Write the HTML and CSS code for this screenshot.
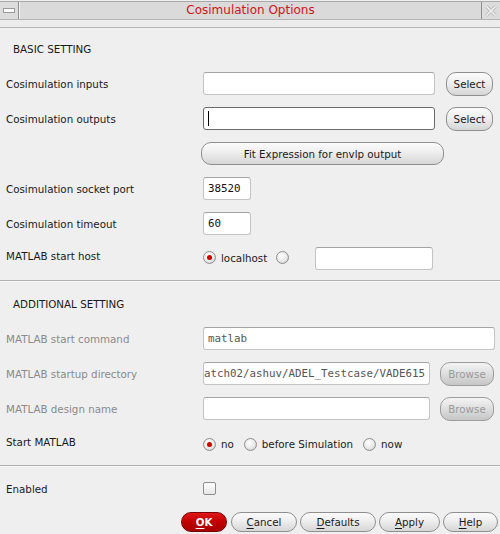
FILE: index.html
```html
<!DOCTYPE html>
<html>
<head>
<meta charset="utf-8">
<link rel="stylesheet" href="styles.css">
</head>
<body>
<div class="window">
  <div class="titlebar">
    <div class="tb-btn tb-left"><span class="min-icon"></span></div>
    <div class="title">Cosimulation Options</div>
    <div class="tb-btn tb-right">
      <svg width="12" height="12" viewBox="0 0 12 12">
        <path d="M1.5 1.5 L10.5 10.5 M10.5 1.5 L1.5 10.5" stroke="#bdbdbd" stroke-width="3.4" fill="none"/>
        <path d="M1.5 1.5 L10.5 10.5 M10.5 1.5 L1.5 10.5" stroke="#f4f4f4" stroke-width="1.4" fill="none"/>
      </svg>
    </div>
  </div>
  <div class="title-gap"></div>

  <div class="section basic">
    <div class="heading">BASIC SETTING</div>
    <div class="row">
      <span class="lbl">Cosimulation inputs</span>
      <span class="input w232"></span>
      <span class="btn sel">Select</span>
    </div>
    <div class="row">
      <span class="lbl">Cosimulation outputs</span>
      <span class="input w232 focus"><span class="caret"></span></span>
      <span class="btn sel">Select</span>
    </div>
    <div class="row">
      <span class="lbl"></span>
      <span class="btn fit">Fit Expression for envlp output</span>
    </div>
    <div class="row">
      <span class="lbl">Cosimulation socket port</span>
      <span class="input w48 mono">38520</span>
    </div>
    <div class="row">
      <span class="lbl">Cosimulation timeout</span>
      <span class="input w48 mono">60</span>
    </div>
    <div class="row host">
      <span class="lbl up">MATLAB start host</span>
      <span class="radio on"></span>
      <span class="opt">localhost</span>
      <span class="radio r2"></span>
      <span class="input w118 hostin"></span>
    </div>
  </div>

  <div class="sep sep1"></div>

  <div class="section additional">
    <div class="heading">ADDITIONAL SETTING</div>
    <div class="row">
      <span class="lbl dim">MATLAB start command</span>
      <span class="input w292 mono gray">matlab</span>
    </div>
    <div class="row">
      <span class="lbl dim">MATLAB startup directory</span>
      <span class="input w227 mono gray scrolled">atch02/ashuv/ADEL_Testcase/VADE615</span>
      <span class="btn browse">Browse</span>
    </div>
    <div class="row">
      <span class="lbl dim">MATLAB design name</span>
      <span class="input w227"></span>
      <span class="btn browse">Browse</span>
    </div>
    <div class="row start">
      <span class="lbl">Start MATLAB</span>
      <span class="radio on"></span>
      <span class="opt">no</span>
      <span class="radio r-before"></span>
      <span class="opt">before Simulation</span>
      <span class="radio r-now"></span>
      <span class="opt">now</span>
    </div>
  </div>

  <div class="sep sep2"></div>

  <div class="row enabled">
    <span class="lbl">Enabled</span>
    <span class="check"></span>
  </div>

  <div class="actions">
    <span class="btn act ok"><u>O</u>K</span>
    <span class="btn act cancel"><u>C</u>ancel</span>
    <span class="btn act defaults"><u>D</u>efaults</span>
    <span class="btn act apply"><u>A</u>pply</span>
    <span class="btn act help"><u>H</u>elp</span>
  </div>
</div>
</body>
</html>
```

FILE: styles.css
```css
html, body {
  margin: 0;
  padding: 0;
}
body {
  width: 500px;
  height: 534px;
  overflow: hidden;
  background: #efefef;
  font-family: "DejaVu Sans", "Liberation Sans", sans-serif;
  font-size: 10.3px;
  color: #1a1a1a;
}
.window {
  width: 500px;
  height: 534px;
}

/* title bar */
.titlebar {
  margin-top: 1px;
  height: 17px;
  border-top: 1px solid #a9a9a9;
  border-bottom: 1px solid #b4b4b4;
  background: #dadada;
  display: flex;
  align-items: stretch;
}
.tb-btn {
  width: 18px;
  display: flex;
  align-items: center;
  justify-content: center;
  background: #dcdcdc;
}
.tb-left {
  border-right: 1px solid #8e8e8e;
}
.tb-right {
  border-left: 1px solid #8e8e8e;
}
.min-icon {
  width: 10px;
  height: 3px;
  background: #fafafa;
  border: 1px solid #9a9a9a;
}
.title {
  flex: 1;
  text-align: center;
  color: #d2121c;
  font-size: 12px;
  line-height: 17px;
  border-left: 1px solid #f4f4f4;
}
.title-gap {
  height: 7px;
  border-bottom: 1px solid #b6b6b6;
  background: #ececec;
}

/* sections */
.section.basic {
  padding-top: 3px;
}
.heading {
  height: 35px;
  display: flex;
  align-items: center;
  padding-left: 13px;
  color: #1a1a1a;
}
.row {
  height: 35px;
  display: flex;
  align-items: center;
  padding-left: 6px;
}
.lbl {
  width: 197px;
  flex: none;
}
.lbl.up {
  position: relative;
  top: -3px;
}
.lbl.dim {
  color: #8a8a8a;
}

.input {
  box-sizing: border-box;
  height: 23px;
  background: #ffffff;
  border: 1px solid #c4c4c4;
  border-top-color: #a4a4a4;
  border-radius: 3px;
  display: flex;
  align-items: center;
  padding-left: 4px;
  overflow: hidden;
  white-space: nowrap;
  flex: none;
}
.input.focus {
  border-color: #6a6a6a;
}
.caret {
  width: 1px;
  height: 15px;
  background: #000;
}
.w232 { width: 232px; }
.w48 { width: 48px; }
.w118 { width: 118px; }
.w292 { width: 292px; }
.w227 { width: 227px; }
.mono {
  font-family: "DejaVu Sans Mono", "Liberation Mono", monospace;
  font-size: 10.8px;
  color: #111111;
  padding-left: 4px;
}
.mono.gray {
  color: #555;
}
.mono.scrolled {
  padding-left: 0;
}

/* buttons */
.btn {
  box-sizing: border-box;
  display: flex;
  align-items: center;
  justify-content: center;
  border: 1px solid #8f8f8f;
  border-radius: 9px;
  background: linear-gradient(#fbfbfb, #f0f0f0 40%, #d6d6d6);
  color: #1a1a1a;
  white-space: nowrap;
  flex: none;
}
.btn.sel {
  width: 47px;
  height: 24px;
  margin-left: 11px;
  border-radius: 10px;
}
.btn.fit {
  width: 243px;
  height: 23px;
  margin-left: -2px;
  border-radius: 10px;
}
.btn.browse {
  width: 54px;
  height: 24px;
  margin-left: 10px;
  border-radius: 10px;
  color: #9a9a9a;
  background: linear-gradient(#f4f4f4, #e2e2e2 40%, #c6c6c6);
  border-color: #9c9c9c;
}

/* radios */
.radio {
  box-sizing: border-box;
  width: 13px;
  height: 13px;
  border-radius: 50%;
  border: 1px solid #8e8e8e;
  background: radial-gradient(circle at 40% 35%, #ffffff, #e8e8e8 55%, #c4c4c4);
  position: relative;
  flex: none;
}
.radio.on::after {
  content: "";
  position: absolute;
  left: 3px;
  top: 3px;
  width: 5px;
  height: 5px;
  border-radius: 50%;
  background: #d20000;
}
.row.host .radio,
.row.host .opt {
  position: relative;
  top: -1px;
}
.opt {
  margin-left: 5px;
}
.radio.r2 {
  margin-left: 9px;
}
.hostin {
  margin-left: 26px;
}

.sep {
  height: 1px;
  background: #b0b0b0;
  border-bottom: 1px solid #f8f8f8;
}
.sep1 {
  margin-top: 4px;
}
.section.additional {
  padding-top: 4px;
}
.row.start {
  height: 32px;
}
.row.start .radio,
.row.start .opt {
  position: relative;
  top: 2px;
}
.radio.r-before {
  margin-left: 10px;
}
.radio.r-now {
  margin-left: 10px;
}
.sep2 {
  margin-top: 7px;
}

.row.enabled {
  height: 42px;
}
.row.enabled .lbl {
  position: relative;
  top: 1px;
}
.check {
  box-sizing: border-box;
  width: 13px;
  height: 13px;
  border: 1px solid #8e8e8e;
  border-radius: 2px;
  background: linear-gradient(#ffffff, #e6e6e6);
}

/* action buttons */
.actions {
  display: flex;
  padding-left: 181px;
  padding-top: 3px;
}
.btn.act {
  height: 20px;
  border-radius: 10px;
}
.btn.act u {
  text-underline-offset: 2px;
}
.btn.ok {
  width: 46px;
  background: linear-gradient(#e01818, #c00000 50%, #a80000);
  border-color: #7a0000;
  color: #ffffff;
  font-weight: bold;
}
.btn.cancel { width: 66px; margin-left: 4px; }
.btn.defaults { width: 76px; margin-left: 3px; }
.btn.apply { width: 61px; margin-left: 3px; }
.btn.help { width: 55px; margin-left: 3px; }
```
